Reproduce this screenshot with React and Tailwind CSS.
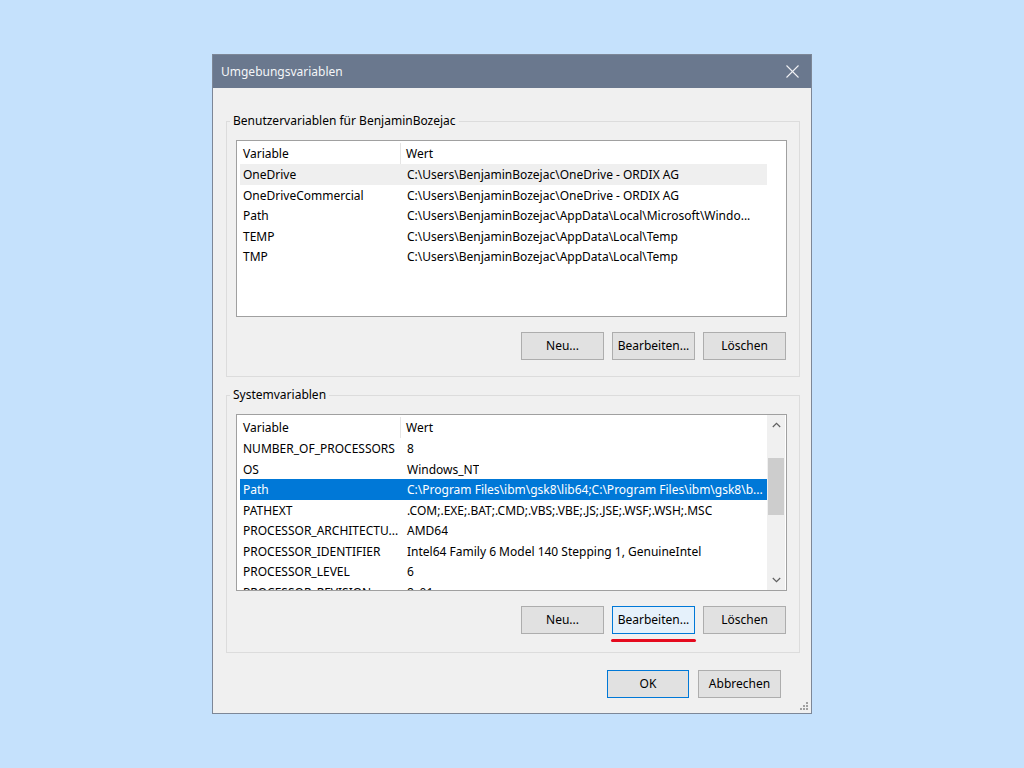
import React from 'react';

const userVars = [
  ['OneDrive', 'C:\\Users\\BenjaminBozejac\\OneDrive - ORDIX AG'],
  ['OneDriveCommercial', 'C:\\Users\\BenjaminBozejac\\OneDrive - ORDIX AG'],
  ['Path', 'C:\\Users\\BenjaminBozejac\\AppData\\Local\\Microsoft\\Windo...'],
  ['TEMP', 'C:\\Users\\BenjaminBozejac\\AppData\\Local\\Temp'],
  ['TMP', 'C:\\Users\\BenjaminBozejac\\AppData\\Local\\Temp'],
];

const sysVars = [
  ['NUMBER_OF_PROCESSORS', '8'],
  ['OS', 'Windows_NT'],
  ['Path', 'C:\\Program Files\\ibm\\gsk8\\lib64;C:\\Program Files\\ibm\\gsk8\\b...'],
  ['PATHEXT', '.COM;.EXE;.BAT;.CMD;.VBS;.VBE;.JS;.JSE;.WSF;.WSH;.MSC'],
  ['PROCESSOR_ARCHITECTU...', 'AMD64'],
  ['PROCESSOR_IDENTIFIER', 'Intel64 Family 6 Model 140 Stepping 1, GenuineIntel'],
  ['PROCESSOR_LEVEL', '6'],
  ['PROCESSOR_REVISION', '8c01'],
];

const Chevron = ({ up }) => (
  <svg width="9" height="6" viewBox="0 0 9 6" fill="none" stroke="#606060" strokeWidth="1.2">
    {up ? <polyline points="0.8 5 4.5 1.3 8.2 5" /> : <polyline points="0.8 1 4.5 4.7 8.2 1" />}
  </svg>
);

const Scrollbar = () => (
  <div className="w-[18px] h-full bg-[#f0f0f0] flex flex-col shrink-0">
    <div className="h-[20px] flex items-center justify-center"><Chevron up /></div>
    <div className="h-[23px]" />
    <div className="h-[57px] mx-[1px] bg-[#cdcdcd]" />
    <div className="flex-1" />
    <div className="h-[20px] flex items-center justify-center"><Chevron /></div>
  </div>
);

const VarList = ({ rows, selected, selectedStyle, scroll }) => (
  <div className="h-[177px] w-full border border-[#a0a0a0] bg-white flex overflow-hidden">
    <div className="w-[530px] shrink-0 overflow-hidden">
      <div className="h-[23px] pt-[2px] flex items-center">
        <div className="w-[164px] shrink-0 h-full pl-[6px] flex items-center border-r border-[#e5e5e5]">Variable</div>
        <div className="pl-[5px]">Wert</div>
      </div>
      {rows.map(([name, value], i) => (
        <div
          key={name + i}
          className={
            'ml-[3px] h-[20.5px] pt-[2px] flex items-center whitespace-nowrap ' +
            (i === selected ? selectedStyle : '')
          }
        >
          <div className="w-[164px] shrink-0 pl-[3px] overflow-hidden">{name}</div>
          <div className="pl-[3px] overflow-hidden">{value}</div>
        </div>
      ))}
    </div>
    {scroll ? <Scrollbar /> : <div className="w-[18px]" />}
  </div>
);

const Btn = ({ children, focus, def, w = 'w-[83px]' }) => (
  <button
    className={
      w +
      ' h-[28px] border text-[12px] text-black ' +
      (focus
        ? 'bg-[#e5f1fb] border-[#0078d7]'
        : def
        ? 'bg-[#e1e1e1] border-[#0078d7]'
        : 'bg-[#e1e1e1] border-[#adadad]')
    }
  >
    {children}
  </button>
);

const Group = ({ title, children }) => (
  <fieldset className="border border-[#dcdcdc] pl-[9px] pr-[12px] pb-[16px]">
    <legend className="ml-[-6px] px-[3px] h-[16px] leading-[16px]">{title}</legend>
    {children}
  </fieldset>
);

export default function App() {
  return (
    <div className="h-screen w-full bg-[#c5e1fc] flex items-center justify-center font-['Noto_Sans',sans-serif] text-[12px] text-black">
      <div className="w-[600px] h-[660px] border border-[#7d8797] bg-[#f0f0f0] flex flex-col relative">
        <div className="h-[33px] bg-[#6a788e] flex items-center justify-between text-[#f4f6f8] text-[12px]">
          <span className="pl-[8px]">Umgebungsvariablen</span>
          <svg className="mr-[12px]" width="13" height="13" viewBox="0 0 13 13" stroke="#f0f2f5" strokeWidth="1.1">
            <line x1="0.5" y1="0.5" x2="12.5" y2="12.5" />
            <line x1="12.5" y1="0.5" x2="0.5" y2="12.5" />
          </svg>
        </div>

        <div className="pt-[25px] pl-[13px] pr-[11px]">
          <Group title="Benutzervariablen für BenjaminBozejac">
            <div className="mt-[11px]">
              <VarList rows={userVars} selected={0} selectedStyle="bg-[#efefef]" />
            </div>
            <div className="mt-[15px] flex justify-end gap-[8px] pr-[1px]">
              <Btn>Neu...</Btn>
              <Btn>Bearbeiten...</Btn>
              <Btn>Löschen</Btn>
            </div>
          </Group>

          <div className="mt-[10px]">
            <Group title="Systemvariablen">
              <div className="mt-[11px]">
                <VarList rows={sysVars} selected={2} selectedStyle="bg-[#0078d7] text-white" scroll />
              </div>
              <div className="mt-[15px] flex justify-end gap-[8px] pr-[1px] pb-[2px]">
                <Btn>Neu...</Btn>
                <div className="relative">
                  <Btn focus>Bearbeiten...</Btn>
                  <div className="absolute left-[-1px] right-[-1px] top-[33px] h-[3px] rounded-full bg-[#e50a1e]" />
                </div>
                <Btn>Löschen</Btn>
              </div>
            </Group>
          </div>
        </div>

        <div className="mt-[17px] flex justify-end gap-[9px] pr-[30px]">
          <Btn def w="w-[82px]">OK</Btn>
          <Btn>Abbrechen</Btn>
        </div>

        <svg className="absolute right-[2px] bottom-[2px]" width="10" height="10" viewBox="0 0 10 10" fill="#a0a0a0">
          <rect x="7" y="1" width="2" height="2" />
          <rect x="4" y="4" width="2" height="2" />
          <rect x="7" y="4" width="2" height="2" />
          <rect x="1" y="7" width="2" height="2" />
          <rect x="4" y="7" width="2" height="2" />
          <rect x="7" y="7" width="2" height="2" />
        </svg>
      </div>
    </div>
  );
}
